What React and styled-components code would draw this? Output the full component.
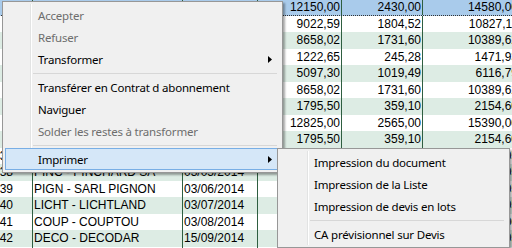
import React from 'react';
import styled, { createGlobalStyle } from 'styled-components';

const Global = createGlobalStyle`
  html, body { margin: 0; padding: 0; background: #fff; overflow: hidden; }
`;

const Page = styled.div`
  position: relative;
  width: 512px;
  height: 248px;
  overflow: hidden;
`;

const Grid = styled.div`
  display: flex;
  flex-direction: column;
  margin-left: -20px;
  margin-top: -1px;
  font-family: "Liberation Sans", Arial, sans-serif;
  font-size: 12px;
  color: #000;
`;

const Row = styled.div`
  display: grid;
  grid-template-columns: 53px 150px 75px 84px 81px 97px;
  height: 16.5px;
  background: ${p => (p.$selected ? '#a9cbeb' : p.$alt ? '#ddece4' : '#fff')};
  box-sizing: border-box;
  ${p => p.$selected && 'border-top: 1px dotted #333; border-bottom: 1px dotted #333;'}
`;

const Cell = styled.div`
  box-sizing: border-box;
  border-right: 1px solid #2e5e40;
  padding: ${p => (p.$right ? '0 1px 0 0' : '0 0 0 1px')};
  white-space: nowrap;
  overflow: hidden;
  display: flex;
  align-items: center;
  justify-content: ${p => (p.$right ? 'flex-end' : 'flex-start')};
`;

const IdCell = styled(Cell)`
  padding-right: 19px;
  justify-content: flex-end;
`;

const Menu = styled.div`
  position: absolute;
  left: ${p => p.$left}px;
  top: ${p => p.$top}px;
  width: ${p => p.$width}px;
  box-sizing: border-box;
  background: #f0f0f0;
  border: 1px solid #979797;
  box-shadow: 2px 2px 2px rgba(0, 0, 0, 0.35);
  padding: 2px;
  font-family: "Noto Sans", "Open Sans", sans-serif;
  font-size: 11.5px;
  letter-spacing: -0.2px;
  z-index: ${p => p.$z || 1};
`;

const Gutter = styled.div`
  position: absolute;
  top: 2px;
  bottom: 2px;
  left: ${p => p.$x}px;
  width: 1px;
  background: #e2e3e3;
  border-right: 1px solid #fff;
`;

const Item = styled.div`
  position: relative;
  height: 22px;
  display: flex;
  align-items: center;
  box-sizing: border-box;
  padding-left: ${p => p.$indent}px;
  color: ${p => (p.$disabled ? '#6d6d6d' : '#000')};
  border: 1px solid ${p => (p.$active ? '#78aee5' : 'transparent')};
  background: ${p => (p.$active ? '#d5e7f8' : 'transparent')};
  white-space: nowrap;
`;

const Arrow = styled.svg`
  position: absolute;
  right: 7px;
  top: 7px;
`;

const Separator = styled.div`
  height: 6px;
  display: flex;
  align-items: center;
  padding-left: ${p => p.$indent}px;
  padding-right: 3px;
  &::after {
    content: '';
    flex: 1;
    height: 1px;
    background: #d7d7d7;
  }
`;

const rows = [
  { id: '', name: '', date: '', a: '12150,00', b: '2430,00', c: '14580,00' },
  { id: '', name: '', date: '', a: '9022,59', b: '1804,52', c: '10827,11' },
  { id: '', name: '', date: '', a: '8658,02', b: '1731,60', c: '10389,62' },
  { id: '', name: '', date: '', a: '1222,65', b: '245,28', c: '1471,93' },
  { id: '', name: '', date: '', a: '5097,30', b: '1019,49', c: '6116,79' },
  { id: '', name: '', date: '', a: '8658,02', b: '1731,60', c: '10389,62' },
  { id: '', name: '', date: '', a: '1795,50', b: '359,10', c: '2154,60' },
  { id: '', name: '', date: '', a: '12825,00', b: '2565,00', c: '15390,00' },
  { id: '', name: '', date: '', a: '1795,50', b: '359,10', c: '2154,60' },
  { id: '37', name: 'PINC - PINCHARD', date: '02/06/2014', a: '1200,00', b: '240,00', c: '1440,05' },
  { id: '38', name: 'PINC - PINCHARD SA', date: '03/05/2014', a: '1200,00', b: '240,00', c: '1440,05' },
  { id: '39', name: 'PIGN - SARL PIGNON', date: '03/06/2014', a: '1200,00', b: '240,00', c: '1440,05' },
  { id: '40', name: 'LICHT - LICHTLAND', date: '03/07/2014', a: '1200,00', b: '240,00', c: '1440,05' },
  { id: '41', name: 'COUP - COUPTOU', date: '03/08/2014', a: '1200,00', b: '240,00', c: '1440,00' },
  { id: '42', name: 'DECO - DECODAR', date: '15/09/2014', a: '1200,00', b: '240,00', c: '1440,05' },
  { id: '43', name: '', date: '', a: '', b: '', c: '' },
];

const ArrowIcon = () => (
  <Arrow width="4" height="7" viewBox="0 0 4 7">
    <path d="M0 0 L4 3.5 L0 7 Z" fill="#000" />
  </Arrow>
);

export default function App() {
  return (
    <Page>
      <Global />
      <Grid>
        {rows.map((r, i) => (
          <Row key={i} $selected={i === 0} $alt={i % 2 === 0}>
            <IdCell>{r.id}</IdCell>
            <Cell>{r.name}</Cell>
            <Cell>{r.date}</Cell>
            <Cell $right>{r.a}</Cell>
            <Cell $right>{r.b}</Cell>
            <Cell $right>{r.c}</Cell>
          </Row>
        ))}
      </Grid>

      <Menu $left={2} $top={1} $width={281}>
        <Gutter $x={27} />
        <Item $indent={32} $disabled>Accepter</Item>
        <Item $indent={32} $disabled>Refuser</Item>
        <Item $indent={32}>Transformer<ArrowIcon /></Item>
        <Separator $indent={28} />
        <Item $indent={32}>Transférer en Contrat d abonnement</Item>
        <Item $indent={32}>Naviguer</Item>
        <Item $indent={32} $disabled>Solder les restes à transformer</Item>
        <Separator $indent={28} />
        <Item $indent={32} $active>Imprimer<ArrowIcon /></Item>
      </Menu>

      <Menu $left={277} $top={148} $width={233} $z={2}>
        <Gutter $x={29} />
        <Item $indent={33}>Impression du document</Item>
        <Item $indent={33}>Impression de la Liste</Item>
        <Item $indent={33}>Impression de devis en lots</Item>
        <Separator $indent={30} />
        <Item $indent={33}>CA prévisionnel sur Devis</Item>
      </Menu>
    </Page>
  );
}
